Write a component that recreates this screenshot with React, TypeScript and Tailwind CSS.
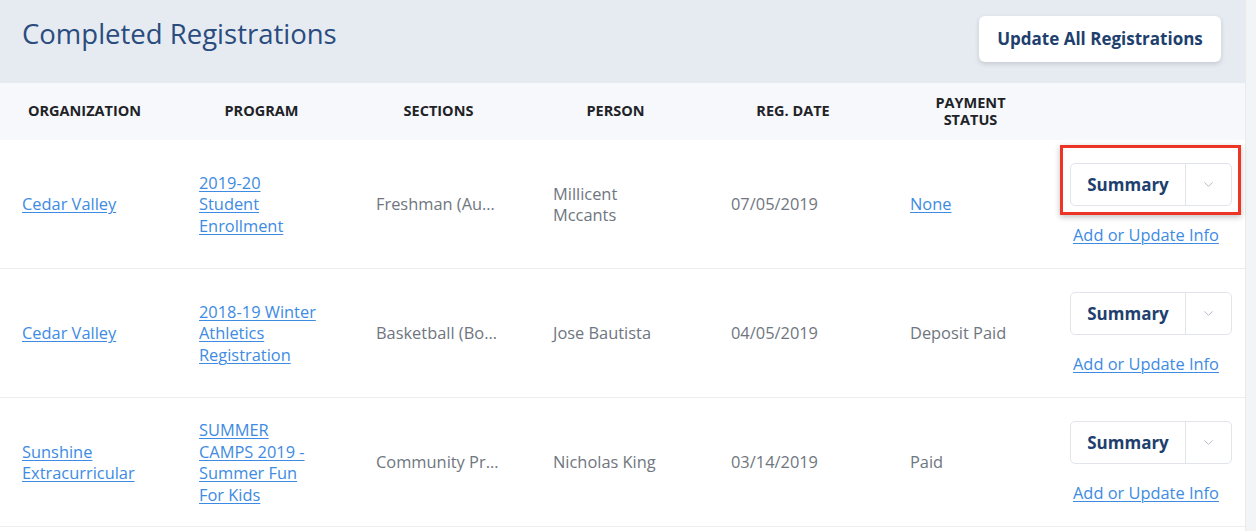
import { ChevronDown } from "lucide-react";

interface Registration {
  org: string;
  program: string;
  section: string;
  person: string;
  date: string;
  payment: string;
  paymentLink: boolean;
  highlight?: boolean;
}

const rows: Registration[] = [
  {
    org: "Cedar Valley",
    program: "2019-20 Student Enrollment",
    section: "Freshman (August 2019)",
    person: "Millicent Mccants",
    date: "07/05/2019",
    payment: "None",
    paymentLink: true,
    highlight: true,
  },
  {
    org: "Cedar Valley",
    program: "2018-19 Winter Athletics Registration",
    section: "Basketball (Boys)",
    person: "Jose Bautista",
    date: "04/05/2019",
    payment: "Deposit Paid",
    paymentLink: false,
  },
  {
    org: "Sunshine Extracurricular",
    program: "SUMMER CAMPS 2019 - Summer Fun For Kids",
    section: "Community Programs",
    person: "Nicholas King",
    date: "03/14/2019",
    payment: "Paid",
    paymentLink: false,
  },
];

const cols = "grid grid-cols-[177px_177px_177px_177px_178px_177px_1fr]";
const link = "text-[#3d8be3] underline underline-offset-2 decoration-1";

function SplitButton({ highlight }: { highlight?: boolean }) {
  return (
    <div className="relative ml-[7px] w-[162px]">
      <div className="flex h-[43px] rounded-[5px] border border-[#e1e5eb] bg-white">
        <button className="flex-1 text-[17px] font-bold text-[#213f6e]">Summary</button>
        <div className="flex w-[46px] items-center justify-center border-l border-[#e1e5eb] text-[#b5bcc6]">
          <ChevronDown size={15} strokeWidth={1.6} />
        </div>
      </div>
      {highlight && (
        <div className="absolute -left-[10px] -top-[18px] h-[70px] w-[181px] border-[3px] border-[#ee3424] shadow-[0_2px_6px_rgba(0,0,0,0.25)]" />
      )}
    </div>
  );
}

export default function App() {
  return (
    <div
      className="flex min-h-[531px] bg-[#f3f4f6]"
      style={{ fontFamily: "'Open Sans', 'Liberation Sans', sans-serif" }}
    >
      <div className="w-[1246px] bg-white border-r border-[#e8eaee]">
        <div className="flex h-[83px] items-start justify-between bg-[#e6ebf2] pl-[22px] pr-[24px]">
          <h1 className="mt-[13px] text-[27.5px] text-[#2b4c7e]">Completed Registrations</h1>
          <button className="mt-[16px] h-[46px] w-[242px] rounded-[6px] bg-white text-[17px] font-bold text-[#213f6e] shadow-[0_2px_5px_rgba(0,0,0,0.15)]">
            Update All Registrations
          </button>
        </div>

        <div className={`${cols} h-[57px] items-center bg-[#f6f8fb] text-[14.5px] font-bold uppercase leading-[16.5px] text-[#1f2328]`}>
          {["Organization", "Program", "Sections", "Person", "Reg. Date", "Payment Status"].map((h) => (
            <div key={h} className="pl-[22px] pr-[30px] text-center">
              {h === "Payment Status" ? (
                <>
                  Payment
                  <br />
                  Status
                </>
              ) : (
                h
              )}
            </div>
          ))}
          <div />
        </div>

        {rows.map((r, i) => (
          <div
            key={i}
            className={`${cols} h-[129px] items-center border-b border-[#ededee] text-[16.4px] leading-[21.5px] text-[#6f7680]`}
          >
            <div className="pl-[22px] pr-[30px]">
              <a href="#" className={link}>{r.org}</a>
            </div>
            <div className="pl-[22px] pr-[36px]">
              <a href="#" className={link}>{r.program}</a>
            </div>
            <div className="pl-[22px] pr-[31px]">
              <div className="truncate">{r.section}</div>
            </div>
            <div className="pl-[22px] pr-[40px]">{r.person}</div>
            <div className="pl-[23px]">{r.date}</div>
            <div className="pl-[24px]">
              {r.paymentLink ? <a href="#" className={link}>{r.payment}</a> : r.payment}
            </div>
            <div className="flex flex-col items-start">
              <SplitButton highlight={r.highlight} />
              <a href="#" className={`${link} ml-[10px] mt-[18px]`}>Add or Update Info</a>
            </div>
          </div>
        ))}
      </div>
    </div>
  );
}
